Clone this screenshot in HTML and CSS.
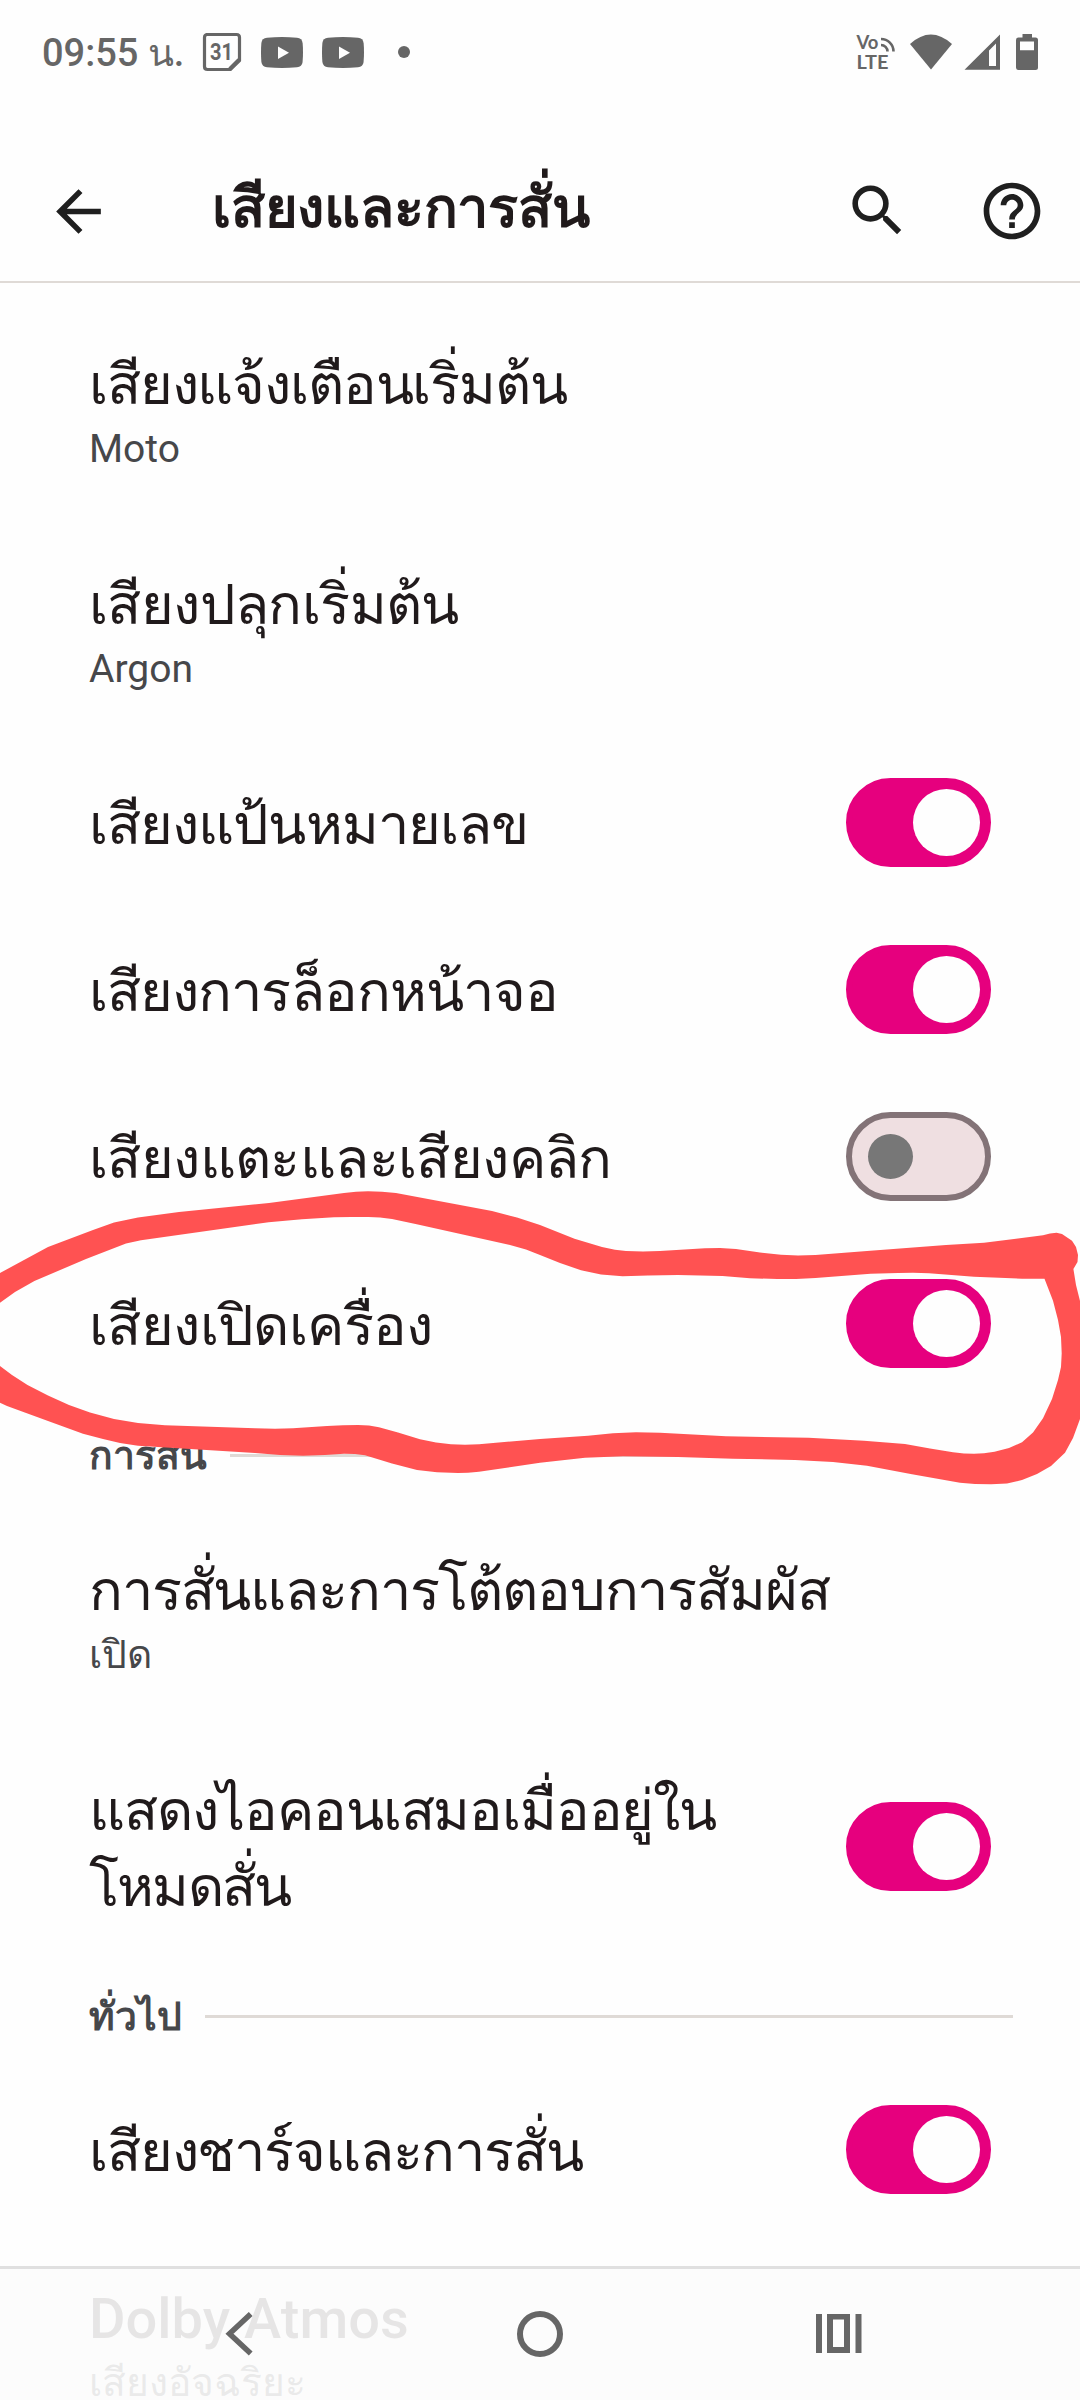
FILE: index.html
```html
<!DOCTYPE html>
<html lang="th">
<head>
<meta charset="utf-8">
<title>เสียงและการสั่น</title>
<link rel="stylesheet" href="styles.css">
</head>
<body>
<div class="screen">
  <div class="status">
    <span class="clock">09:55 น.</span>
    <svg class="cal" width="40" height="40" viewBox="0 0 40 40"><path d="M4 2.500H34.500Q37.500 2.500 37.500 5.500V28.500L28.500 37.500H5.500Q2.500 37.500 2.500 34.500V5.500Q2.500 2.500 5.500 2.500" fill="none" stroke="#666" stroke-width="3.200"/><path d="M38 27.500L27.500 38L26.500 35.500L35.500 26.500Z" fill="#666"/><text x="8" y="28" textLength="23" lengthAdjust="spacingAndGlyphs" class="caltext">31</text></svg>
    <svg class="yt" width="42" height="31" viewBox="0 0 42 31"><path d="M6 .8Q21-.6 36 .8Q41 1.300 41.600 6Q42.400 15.500 41.600 25Q41 29.700 36 30.200Q21 31.600 6 30.200Q1 29.700.4 25Q-.4 15.500.4 6Q1 1.300 6 .8Z" fill="#666"/><path d="M17 9.500V22L28 15.750Z" fill="#fefefe"/></svg>
    <svg class="yt" width="42" height="31" viewBox="0 0 42 31"><path d="M6 .8Q21-.6 36 .8Q41 1.300 41.600 6Q42.400 15.500 41.600 25Q41 29.700 36 30.200Q21 31.600 6 30.200Q1 29.700.4 25Q-.4 15.500.4 6Q1 1.300 6 .8Z" fill="#666"/><path d="M17 9.500V22L28 15.750Z" fill="#fefefe"/></svg>
    <span class="dot"></span>
    <svg class="system" width="190" height="44" viewBox="0 0 190 44">
      <text x="6.500" y="19" class="volte" textLength="22" lengthAdjust="spacingAndGlyphs">Vo</text><text x="6.500" y="38.800" class="volte" textLength="32" lengthAdjust="spacingAndGlyphs">LTE</text>
      <path d="M31 9A12.500 12.500 0 0 1 43.500 21.500M31 15A6.500 6.500 0 0 1 37.500 21.500" fill="none" stroke="#666" stroke-width="2.600"/>
      <path d="M60 14Q80.800-5 102 14L81 39.500Z" fill="#666"/>
      <path d="M114.500 39.800L150 4.500V39.800ZM139 20.500V36H146V13.500Z" fill="#666" fill-rule="evenodd"/>
      <path d="M166 10Q166 7.500 168.500 7.500H172.500V4H182V7.500H185.500Q188 7.500 188 10V37.500Q188 40 185.500 40H168.500Q166 40 166 37.500ZM170 11.500V20.300H184V11.500Z" fill="#666" fill-rule="evenodd"/>
    </svg>
  </div>
  <header class="bar">
    <svg class="back" width="67" height="67" viewBox="0 0 24 24"><path d="M20 11H7.830l5.590-5.590L12 4l-8 8 8 8 1.410-1.410L7.830 13H20z"/></svg>
    <h1>เสียงและการสั่น</h1>
    <svg class="search" width="67" height="67" viewBox="0 0 24 24"><path d="M15.500 14h-.79l-.28-.27A6.471 6.471 0 0 0 16 9.500 6.500 6.500 0 1 0 9.500 16c1.610 0 3.090-.59 4.230-1.570l.27.280v.79l5 4.990L20.490 19zm-6 0C7.010 14 5 11.990 5 9.500S7.010 5 9.500 5 14 7.010 14 9.500 11.990 14 9.500 14z"/></svg>
    <svg class="help" width="68" height="68" viewBox="0 0 24 24"><path d="M11 18h2v-2h-2zm1-16C6.480 2 2 6.480 2 12s4.480 10 10 10 10-4.480 10-10S17.520 2 12 2zm0 18c-4.410 0-8-3.590-8-8s3.590-8 8-8 8 3.590 8 8-3.590 8-8 8zm0-14c-2.210 0-4 1.790-4 4h2c0-1.100.9-2 2-2s2 .9 2 2c0 2-3 1.750-3 5h2c0-2.250 3-2.500 3-5 0-2.210-1.790-4-4-4z"/></svg>
  </header>
  <main class="list">
    <div class="row"><div class="label"><p class="name">เสียงแจ้งเตือนเริ่มต้น</p><p class="value">Moto</p></div></div>
    <div class="row"><div class="label"><p class="name loose">เสียงปลุกเริ่มต้น</p><p class="value">Argon</p></div></div>
    <div class="row"><p class="name medium">เสียงแป้นหมายเลข</p><span class="toggle on"></span></div>
    <div class="row"><p class="name medium">เสียงการล็อกหน้าจอ</p><span class="toggle on"></span></div>
    <div class="row"><p class="name loose">เสียงแตะและเสียงคลิก</p><span class="toggle"></span></div>
    <div class="row"><p class="name loose">เสียงเปิดเครื่อง</p><span class="toggle on"></span></div>
    <h2 class="group">การสั่น</h2>
    <div class="row"><div class="label"><p class="name">การสั่นและการโต้ตอบการสัมผัส</p><p class="value">เปิด</p></div></div>
    <div class="row"><p class="name">แสดงไอคอนเสมอเมื่ออยู่ใน<br><span class="tight">โหมดสั่น</span></p><span class="toggle on"></span></div>
    <h2 class="group">ทั่วไป</h2>
    <div class="row"><p class="name">เสียงชาร์จและการสั่น</p><span class="toggle on"></span></div>
    <div class="row"><div class="label"><p class="name latin">Dolby Atmos</p><p class="value">เสียงอัจฉริยะ</p></div></div>
  </main>
  <svg class="marker" width="1080" height="2400" viewBox="0 0 1080 2400"><path fill="#ff5252" d="M0 1273L48 1247L93 1230L114 1222.500L138 1217.500L179 1212L269 1203L344 1193L356 1191.700L368 1191.300L382 1191.700L396 1193L492 1211L517 1217.500L540 1225L574.500 1238.700L602 1247L615 1249.700L626 1251L643 1251.500L660 1251L705 1248.300L720 1248L736 1249L760 1252.500L781 1254.700L798 1255.500L815.500 1255L867 1251L946 1245L984 1242.700L1043 1235.300L1050 1233.500L1056.500 1232.700L1062 1234L1072 1240.700L1076 1247L1078 1255L1077.500 1262L1073.400 1269L1076 1285L1080 1301V1419L1073 1438L1065 1452.700L1051 1466L1037 1474L1022 1480L1007 1483.500L991 1484.300L975 1484L960 1482.700L912 1474.300L867 1465.700L833 1462L795 1460L733 1458.700L678 1457L623 1456.300L585 1457.700L540 1462.700L479 1471.700L468 1472.700L458 1472.900L437 1472.300L417 1470L392 1463.500L365 1455.300L355 1454L344 1453.700L325 1455L303 1455.700L280 1455L255 1453L138 1445.700L120 1443L103 1439L83 1433.700L48 1421L7 1406L0 1402.700V1366L12 1375L27.500 1385L48 1395.500L69 1405L90 1412.500L114 1419L138 1423L165 1425.300L255 1428.300L275 1428.800L293 1428.300L327 1426L343 1425.200L358 1425L369 1425.500L379 1427.300L398 1432.500L420 1439.300L436 1442.500L451 1444.300L465 1444.800L479 1444.300L540 1439L588 1435.700L613 1433.200L636 1432.300L660 1432.800L726 1436.300L808.600 1437.700L864 1440.700L905 1444L930 1448.500L953 1452.300L964 1453.500L974 1453.700L984 1453.200L994.500 1451.700L1009 1448L1022 1442.300L1033 1432.500L1043 1418.300L1052 1399L1058 1380L1061 1367L1061.700 1353.300L1061 1337L1058 1320L1053 1300.700L1044.500 1278.700L1022 1278.700L974 1276.700L929 1273.300L913 1272.700L898 1273L870.600 1273.700L815.500 1278L796 1279L777.600 1279L750 1278.300L722.500 1276L678 1275L648 1275.500L622.600 1276.300L601 1274.500L581 1270.300L560 1263L540 1255L526 1249.500L510 1245L416.700 1224.300L392 1219L380 1217.500L368.500 1217L351 1216.900L334 1217.300L302 1219.300L268.600 1222.300L141 1240.300L126 1243.500L86 1259L34.400 1281L15 1292L0 1302.700Z"/></svg>
  <nav class="nav">
    <svg class="nback" width="28" height="44" viewBox="0 0 28 44"><path d="M25.700 2L4.500 21.800L25.700 41.500" fill="none" stroke="#666" stroke-width="5.500"/></svg>
    <span class="nhome"></span>
    <svg class="nrecent" width="46" height="40" viewBox="0 0 46 40"><path d="M0 0H6V39H0ZM11 0H34V39H11ZM17 5.500V33H28V5.500ZM39.500 0H45.500V39H39.500Z" fill="#666" fill-rule="evenodd"/></svg>
  </nav>
</div>
</body>
</html>
```
FILE: styles.css
```css
* { box-sizing: border-box; margin: 0; padding: 0; }
body { background: #fefefe; font-family: Roboto, sans-serif; color: #201a1b; }
svg { display: block; flex: none; }
.screen { position: relative; width: 1080px; height: 2400px; overflow: hidden; }

.status { display: flex; height: 104px; align-items: center; padding-left: 42px; color: #666; }
.clock { width: 160px; padding-top: 2px; font-size: 38px; font-weight: 500; line-height: 48px; white-space: nowrap; }
.yt { margin-left: 19px; }
.dot { width: 12px; height: 12px; margin-left: 34px; border-radius: 50%; background: #666; }
.system { margin-left: 440px; }
.caltext { font-size: 24px; font-weight: 700; fill: #666; }
.volte { font-family: Lato, sans-serif; font-size: 19.5px; font-weight: 700; fill: #666; }

.bar { display: flex; align-items: flex-start; height: 179px; padding: 73px 33px 0 45px; border-bottom: 2px solid #dfdad6; fill: #1f1f1f; }
.back { margin-top: 1px; }
.bar h1 { flex: 1; margin: -7px 0 0 100px; font-size: 56px; font-weight: 700; line-height: 76px; letter-spacing: -.2px; }
.bar .help { margin-left: 67px; margin-right: 1px; }

.list { padding-top: 16px; }
.row { display: flex; align-items: center; justify-content: space-between; padding: 48px 89px 43px; }
.name { font-size: 56px; line-height: 76px; letter-spacing: -1.15px; white-space: nowrap; }
.medium { letter-spacing: -.92px; }
.loose { letter-spacing: -.6px; }
.tight { letter-spacing: -1.8px; }
.latin { font-weight: 500; letter-spacing: 0; }
.value { height: 53px; color: #46474a; font-size: 39px; line-height: 53px; }
.toggle { display: flex; flex: none; width: 145px; height: 89px; margin: -11px 0 -6px; align-items: center; border: 6px solid #837377; border-radius: 45px; background: #efdfe1; padding: 0 16px; }
.toggle::before { content: ""; width: 45px; height: 45px; border-radius: 50%; background: #777; }
.toggle.on { justify-content: flex-end; border-color: #e6007e; background: #e6007e; padding: 0 5px; }
.toggle.on::before { width: 67px; height: 67px; background: #fefefe; }
.group { display: flex; align-items: center; height: 98px; padding: 0 67px 0 89px; gap: 23px; color: #46474a; font-size: 39px; font-weight: 700; line-height: 98px; white-space: nowrap; }
.group::after { content: ""; flex: 1; height: 3px; margin-top: -1px; background: #dfdad6; }

.marker { position: absolute; left: 0; top: 0; }
.nav { position: absolute; left: 0; right: 0; bottom: 0; height: 134px; display: flex; align-items: center; padding: 0 0 2px 225px; border-top: 3px solid #e0e0e0; background: rgba(252, 252, 252, .9); }
.nhome { width: 46px; height: 46px; margin-left: 264px; border: 6px solid #666; border-radius: 50%; }
.nrecent { margin-left: 253px; }
```
